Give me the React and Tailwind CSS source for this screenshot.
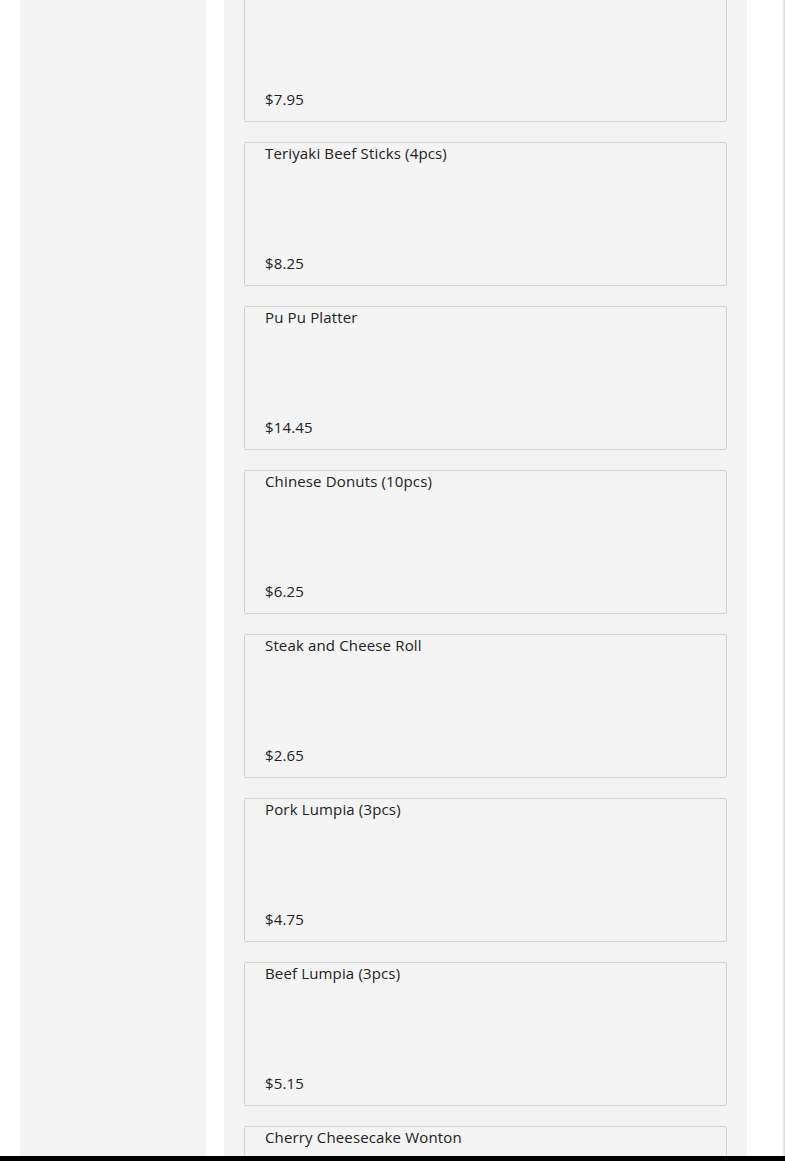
const items = [
  { name: "Crab Rangoon (6pcs)", price: "$7.95" },
  { name: "Teriyaki Beef Sticks (4pcs)", price: "$8.25" },
  { name: "Pu Pu Platter", price: "$14.45" },
  { name: "Chinese Donuts (10pcs)", price: "$6.25" },
  { name: "Steak and Cheese Roll", price: "$2.65" },
  { name: "Pork Lumpia (3pcs)", price: "$4.75" },
  { name: "Beef Lumpia (3pcs)", price: "$5.15" },
  { name: "Cherry Cheesecake Wonton", price: "$3.95" },
];

const MenuCard = ({ name, price }) => (
  <div className="h-[144px] flex flex-col justify-between bg-[#f4f4f4] border border-[#d2d2d2] rounded-[2px] px-5 pt-0 pb-[12px]">
    <p className="text-[15px] leading-[20px] tracking-[0.15px] text-[#222]">{name}</p>
    <p className="text-[15px] leading-[20px] tracking-[0.15px] text-[#222]">{price}</p>
  </div>
);

const App = () => {
  return (
    <div
      className="h-[1161px] overflow-hidden bg-white"
      style={{ fontFamily: '"Open Sans", "Liberation Sans", sans-serif' }}
    >
      <div className="flex gap-[18px] pl-5 pr-[38px]">
        <aside className="w-[186px] shrink-0 h-[1300px] bg-[#f4f4f4]"></aside>
        <main className="flex-1 bg-[#f4f4f4] px-5">
          <div className="flex flex-col gap-5 -mt-[22px]">
            {items.map((item) => (
              <MenuCard key={item.name} {...item} />
            ))}
          </div>
        </main>
      </div>
      <div className="fixed top-0 right-0 h-full w-[3px] bg-gradient-to-r from-white to-[#d8d8d8]"></div>
      <div className="fixed bottom-0 left-0 w-full h-[5px] bg-black"></div>
    </div>
  );
};

export default App;
